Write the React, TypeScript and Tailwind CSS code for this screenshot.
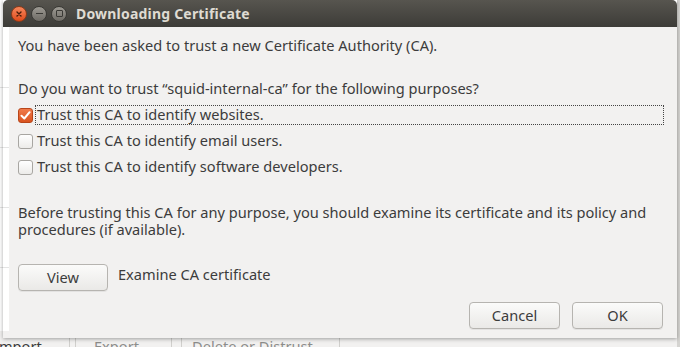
import React from "react";

const font = { fontFamily: '"Noto Sans", "Open Sans", sans-serif' };

function CheckRow({ checked, label, focused }: { checked?: boolean; label: string; focused?: boolean }) {
  return (
    <div className="flex items-center h-[20px]">
      <div
        className={
          "w-[15px] h-[15px] rounded-[3px] flex items-center justify-center shrink-0 " +
          (checked
            ? "bg-gradient-to-b from-[#f07a4a] to-[#d9531e] border border-[#b8461a]"
            : "bg-gradient-to-b from-white to-[#ecebe9] border border-[#a8a6a2]")
        }
      >
        {checked && (
          <svg width="11" height="11" viewBox="0 0 11 11">
            <path d="M1.5 5.8 L4.3 8.5 L9.6 2.2" stroke="white" strokeWidth="2" fill="none" strokeLinecap="round" strokeLinejoin="round" />
          </svg>
        )}
      </div>
      <div
        className={
          "ml-[2px] flex-1 h-[20px] flex items-center pl-[1px] " +
          (focused ? "border border-dotted border-[#444]" : "border border-transparent")
        }
      >
        <span>{label}</span>
      </div>
    </div>
  );
}

function Btn({ children, w }: { children: React.ReactNode; w: string }) {
  return (
    <div
      className={
        w +
        " h-[27px] rounded-[4px] border border-[#b6b4b0] bg-gradient-to-b from-[#fbfbfa] to-[#eae9e7] flex items-center justify-center shadow-[0_1px_0_rgba(0,0,0,0.06)] text-[#3c3c3c]"
      }
    >
      {children}
    </div>
  );
}

export default function App() {
  return (
    <div className="relative w-[680px] h-[347px] overflow-hidden bg-[#e4e3e1]" style={font}>
      {/* background window */}
      <div className="absolute inset-0 bg-white">
        <div className="absolute left-0 top-[28px] w-[9px] h-[310px] flex flex-col text-[14px] text-[#2a2a2a]">
          <div className="h-[60px] border-b border-[#e4e4e4]" />
          <div className="h-[60px] border-b border-[#e4e4e4]" />
          <div className="h-[60px] border-b border-[#e4e4e4]" />
          <div className="h-[60px] border-b border-[#e4e4e4]" />
        </div>
        <div className="absolute left-0 right-0 top-[331px] h-[16px] bg-[#f2f1f0]" />
        <div className="absolute left-[-6px] top-[338px] h-[12px] flex text-[14.6px] leading-[16px] overflow-hidden">
          <div className="w-[76px] border-r border-[#d0cfcc] pl-0 text-[#3c3c3c]">Import</div>
          <div className="w-[6px] border-r border-[#d0cfcc]" />
          <div className="w-[96px] border-r border-[#d0cfcc] pl-[18px] text-[#8d8d8b]">Export</div>
          <div className="w-[10px] border-r border-[#d0cfcc]" />
          <div className="w-[158px] border-r border-[#d0cfcc] pl-[10px] text-[#8d8d8b]">Delete or Distrust</div>
        </div>
        <div className="absolute right-0 top-0 w-[3px] h-[347px] bg-[#d5d4d1]" />
      </div>

      {/* dialog window */}
      <div className="absolute left-[3px] top-0 w-[674px] h-[338px] flex flex-col shadow-[0_1px_4px_rgba(0,0,0,0.35)]">
        <div className="h-[27px] rounded-t-[5px] bg-gradient-to-b from-[#57554f] to-[#3d3c38] flex items-center pl-[8px]">
          <div className="flex items-center gap-[4px]">
            <div className="w-[16px] h-[16px] rounded-full bg-gradient-to-b from-[#f6865a] to-[#df4a17] border border-[#8e3a18] flex items-center justify-center">
              <svg width="8" height="8" viewBox="0 0 8 8">
                <path d="M2 2 L6 6 M6 2 L2 6" stroke="#4a1d0a" strokeWidth="1.4" strokeLinecap="round" />
              </svg>
            </div>
            <div className="w-[16px] h-[16px] rounded-full bg-gradient-to-b from-[#9d9a93] to-[#6e6b65] border border-[#3a3935] flex items-center justify-center">
              <div className="w-[7px] h-[1.5px] bg-[#3a3935]" />
            </div>
            <div className="w-[16px] h-[16px] rounded-full bg-gradient-to-b from-[#9d9a93] to-[#6e6b65] border border-[#3a3935] flex items-center justify-center">
              <div className="w-[7px] h-[7px] border-[1.5px] border-[#3a3935] rounded-[1px]" />
            </div>
          </div>
          <div className="ml-[9px] text-[14px] font-bold text-[#dfdbd2] tracking-[0.2px]">Downloading Certificate</div>
        </div>
        <div className="flex-1 ml-[6px] bg-[#f2f1f0] text-[14.6px] text-[#3c3c3c] flex flex-col pl-[9px] pr-[13px]">
          <div className="mt-[8px] h-[20px] leading-[20px]">You have been asked to trust a new Certificate Authority (CA).</div>
          <div className="mt-[23px] h-[20px] leading-[20px]">Do you want to trust “squid-internal-ca” for the following purposes?</div>
          <div className="mt-[7px] flex flex-col gap-[6px]">
            <CheckRow checked focused label="Trust this CA to identify websites." />
            <CheckRow label="Trust this CA to identify email users." />
            <CheckRow label="Trust this CA to identify software developers." />
          </div>
          <div className="mt-[27px] leading-[17px] pr-[6px]">
            Before trusting this CA for any purpose, you should examine its certificate and its policy and procedures (if available).
          </div>
          <div className="mt-[26px] flex items-center">
            <Btn w="w-[90px]">View</Btn>
            <div className="ml-[10px] -mt-[5px]">Examine CA certificate</div>
          </div>
          <div className="mt-[11px] flex justify-end gap-[12px] pr-[1px]">
            <Btn w="w-[91px]">Cancel</Btn>
            <Btn w="w-[91px]">OK</Btn>
          </div>
        </div>
      </div>
    </div>
  );
}
